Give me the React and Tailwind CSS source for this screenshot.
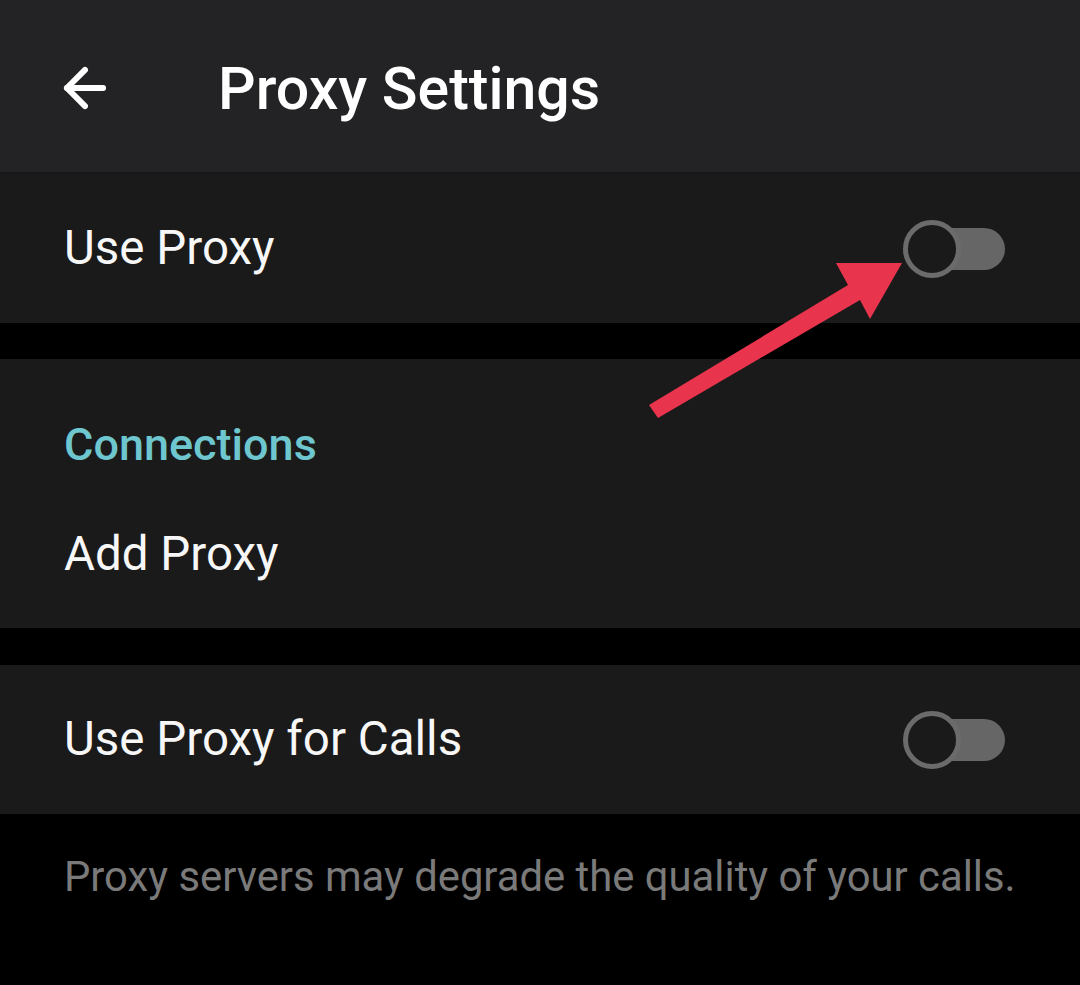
import { ArrowLeft } from 'lucide-react'

const FONT = { fontFamily: 'Roboto, "Noto Sans", sans-serif' }

function Toggle() {
  return (
    <div className="relative w-[102px] h-[58px] shrink-0">
      <div className="absolute right-0 top-[8px] h-[42px] w-[78px] rounded-full bg-[#666666]" />
      <div className="absolute left-0 top-0 h-[58px] w-[58px] rounded-full border-[5px] border-[#6b6b6b] bg-[#1a1a1a]" />
    </div>
  )
}

function ToggleRow({ label }) {
  return (
    <div className="h-[149px] bg-[#1a1a1a] flex items-center justify-between pl-[64px] pr-[75px]">
      <span className="text-[47.5px] text-[#f7f7f7] leading-none">{label}</span>
      <Toggle />
    </div>
  )
}

function Pointer() {
  return (
    <svg className="absolute left-0 top-0 pointer-events-none" width="1080" height="985" viewBox="0 0 1080 985">
      <polygon
        points="649,405 848,285 836,263 902,263 870,319 860,300 658,418"
        fill="#e8344c"
      />
    </svg>
  )
}

export default function App() {
  return (
    <div className="relative w-[1080px] h-[985px] bg-black overflow-hidden" style={FONT}>
      <header className="h-[174px] bg-[#232326] border-b-2 border-[#161616] flex items-center pt-[4px]">
        <div className="w-[218px] flex items-center pl-[54px]">
          <ArrowLeft size={62} strokeWidth={2.3} color="#ffffff" />
        </div>
        <h1 className="text-[59px] font-medium text-white leading-none">Proxy Settings</h1>
      </header>

      <ToggleRow label="Use Proxy" />

      <div className="h-[36px]" />

      <section className="h-[269px] bg-[#1a1a1a] pl-[64px] flex flex-col">
        <div className="h-[170px] flex items-center">
          <span className="text-[45px] font-medium text-[#6ec6cf] leading-none">Connections</span>
        </div>
        <div className="h-[52px] flex items-center">
          <span className="text-[47.5px] text-[#f7f7f7] leading-none">Add Proxy</span>
        </div>
      </section>

      <div className="h-[37px]" />

      <ToggleRow label="Use Proxy for Calls" />

      <p className="pl-[64px] pt-[42px] text-[41.8px] text-[#7a7a7a] leading-none">
        Proxy servers may degrade the quality of your calls.
      </p>

      <Pointer />
    </div>
  )
}
